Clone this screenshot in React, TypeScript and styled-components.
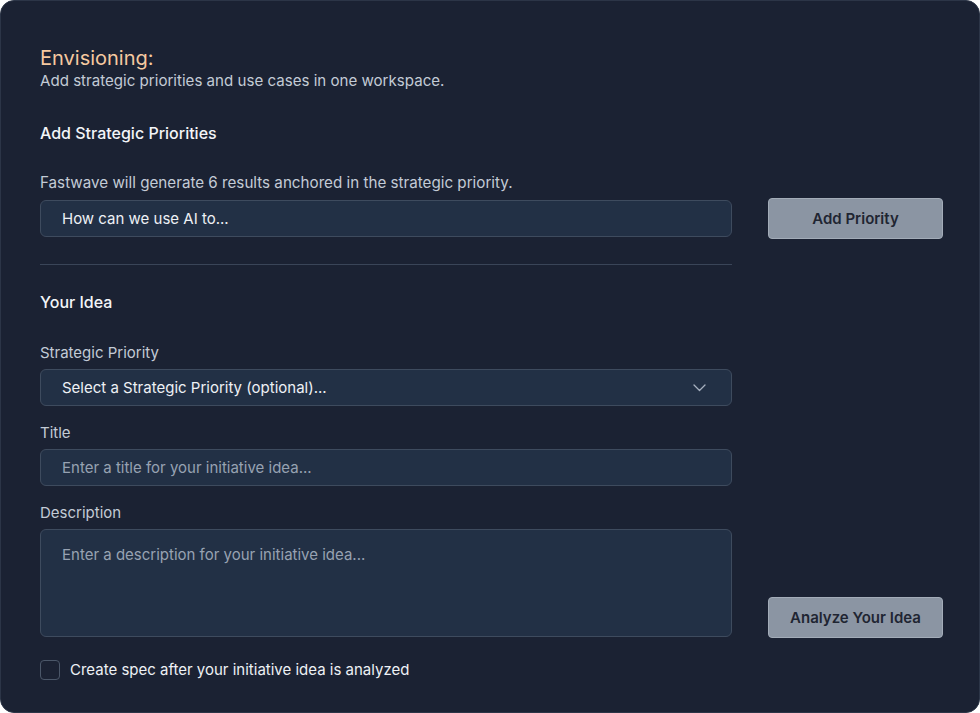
import React from "react";
import styled, { createGlobalStyle } from "styled-components";

const GlobalStyle = createGlobalStyle`
  html, body {
    margin: 0;
    padding: 0;
    background: #ffffff;
  }
  body {
    font-family: Inter, "Noto Sans", "Liberation Sans", sans-serif;
    -webkit-font-smoothing: antialiased;
  }
  * {
    box-sizing: border-box;
  }
`;

const Card = styled.div`
  width: 980px;
  height: 713px;
  background: #1b2233;
  border: 1px solid #2c3547;
  border-radius: 14px;
  padding: 45px 36px 0 39px;
  color: #e6eaf0;
  overflow: hidden;
`;

const Title = styled.h1`
  margin: 0;
  font-size: 20px;
  line-height: 24px;
  font-weight: 400;
  color: #f6c9a0;
`;

const Subtitle = styled.p`
  margin: 1px 0 0;
  font-size: 15.1px;
  line-height: 20px;
  color: #c3cbd6;
`;

const SectionTitle = styled.h2<{ $top: number }>`
  margin: ${(p) => p.$top}px 0 0;
  font-size: 16px;
  line-height: 24px;
  font-weight: 500;
  color: #f3f5f8;
`;

const Row = styled.div<{ $align: "center" | "end" }>`
  display: grid;
  grid-template-columns: 692px 175px;
  column-gap: 36px;
  align-items: ${(p) => (p.$align === "end" ? "end" : "center")};
`;

const Column = styled.div`
  display: flex;
  flex-direction: column;
`;

const Label = styled.label<{ $top: number }>`
  margin-top: ${(p) => p.$top}px;
  margin-bottom: 6px;
  font-size: 15px;
  line-height: 20px;
  color: #c3cbd6;
`;

const Helper = styled(Label)`
  margin-bottom: 5px;
  font-size: 15.2px;
`;

const Field = styled.div<{ $placeholder?: boolean; $tall?: boolean }>`
  display: flex;
  align-items: ${(p) => (p.$tall ? "flex-start" : "center")};
  justify-content: space-between;
  height: ${(p) => (p.$tall ? "108px" : "37px")};
  padding: ${(p) => (p.$tall ? "15px 21px" : "0 21px")};
  background: #223045;
  border: 1px solid #3e4b5e;
  border-radius: 6px;
  font-size: 15px;
  line-height: 20px;
  color: ${(p) => (p.$placeholder ? "#97a2b2" : "#eef1f5")};
`;

const Divider = styled.hr`
  width: 692px;
  margin: 25px 0 0;
  border: 0;
  border-top: 1px solid #3a4558;
`;

const Button = styled.button<{ $shift?: number }>`
  height: 41px;
  width: 175px;
  margin-bottom: ${(p) => p.$shift ?? 0}px;
  background: #8b95a3;
  border: 1px solid #a3acb8;
  border-radius: 4px;
  font-family: inherit;
  font-size: 15px;
  font-weight: 600;
  color: #1f2532;
  cursor: pointer;
`;

const CheckRow = styled.div`
  display: flex;
  align-items: center;
  gap: 10px;
  margin-top: 23px;
  font-size: 15px;
  line-height: 20px;
  color: #eef1f5;
`;

const Box = styled.span`
  width: 20px;
  height: 20px;
  border: 1px solid #4b5769;
  border-radius: 4px;
`;

const Chevron = () => (
  <svg width="13" height="8" viewBox="0 0 13 8" fill="none" style={{ marginRight: 4 }}>
    <path d="M1 1l5.5 5.5L12 1" stroke="#a7b1c0" strokeWidth="1.3" strokeLinecap="round" strokeLinejoin="round" />
  </svg>
);

export default function App() {
  return (
    <>
      <GlobalStyle />
      <Card>
        <Title>Envisioning:</Title>
        <Subtitle>Add strategic priorities and use cases in one workspace.</Subtitle>

        <SectionTitle $top={30}>Add Strategic Priorities</SectionTitle>
        <Helper as="div" $top={28}>
          Fastwave will generate 6 results anchored in the strategic priority.
        </Helper>
        <Row $align="center">
          <Field>How can we use AI to...</Field>
          <Button>Add Priority</Button>
        </Row>

        <Divider />

        <SectionTitle $top={25}>Your Idea</SectionTitle>
        <Row $align="end">
          <Column>
            <Label $top={29}>Strategic Priority</Label>
            <Field>
              Select a Strategic Priority (optional)...
              <Chevron />
            </Field>
            <Label $top={17}>Title</Label>
            <Field $placeholder>Enter a title for your initiative idea...</Field>
            <Label $top={17}>Description</Label>
            <Field $placeholder $tall>
              Enter a description for your initiative idea...
            </Field>
          </Column>
          <Button $shift={-1}>Analyze Your Idea</Button>
        </Row>

        <CheckRow>
          <Box />
          Create spec after your initiative idea is analyzed
        </CheckRow>
      </Card>
    </>
  );
}
